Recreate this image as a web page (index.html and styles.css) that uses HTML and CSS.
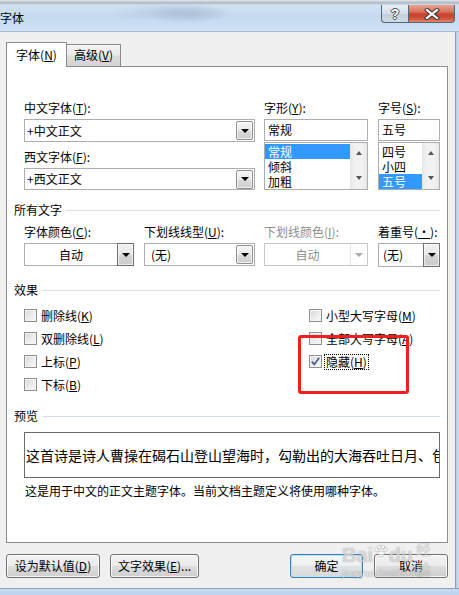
FILE: index.html
```html
<!DOCTYPE html>
<html lang="zh-CN">
<head>
<meta charset="utf-8">
<title>字体</title>
<link rel="stylesheet" href="styles.css">
</head>
<body>
<div class="screen">
  <header class="titlebar">
    <span class="title">字体</span>
    <div class="caption">
      <div class="cap-btn cap-help">?</div>
      <div class="cap-btn cap-close">
        <svg width="16" height="12" viewBox="0 0 16 12"><path d="M3 2 L13 10 M13 2 L3 10" stroke="#3b3b3b" stroke-width="4.2" stroke-linecap="square"/><path d="M3 2 L13 10 M13 2 L3 10" stroke="#ffffff" stroke-width="2.2" stroke-linecap="square"/></svg>
      </div>
    </div>
  </header>

  <div class="frame">
    <div class="client">
      <div class="tabs">
        <div class="tab tab-active">字体(<u>N</u>)</div>
        <div class="tab tab-back">高级(<u>V</u>)</div>
      </div>

      <div class="panel">
        <div class="font-row">
          <div class="col col-face">
            <div class="lbl">中文字体(<u>T</u>):</div>
            <div class="box combo"><span class="val">+中文正文</span><span class="dd dd-inset"><i class="tri"></i></span></div>
            <div class="lbl lbl-next">西文字体(<u>F</u>):</div>
            <div class="box combo short"><span class="val">+西文正文</span><span class="dd dd-inset"><i class="tri"></i></span></div>
          </div>
          <div class="col col-style">
            <div class="lbl">字形(<u>Y</u>):</div>
            <div class="box edit short"><span class="val">常规</span></div>
            <div class="listbox">
              <div class="items">
                <div class="item sel">常规</div>
                <div class="item">倾斜</div>
                <div class="item">加粗</div>
              </div>
              <div class="vscroll"><i class="tri-up"></i><i class="tri-down"></i></div>
            </div>
          </div>
          <div class="col col-size">
            <div class="lbl">字号(<u>S</u>):</div>
            <div class="box edit short"><span class="val">五号</span></div>
            <div class="listbox">
              <div class="items">
                <div class="item">四号</div>
                <div class="item">小四</div>
                <div class="item sel">五号</div>
              </div>
              <div class="vscroll"><i class="tri-up"></i><i class="tri-down"></i></div>
            </div>
          </div>
        </div>

        <div class="group">所有文字</div>
        <div class="attr-row">
          <div class="col a-color">
            <div class="lbl">字体颜色(<u>C</u>):</div>
            <div class="box combo"><span class="val center">自动</span><span class="dd dd-full"><i class="tri"></i></span></div>
          </div>
          <div class="col a-uline">
            <div class="lbl">下划线线型(<u>U</u>):</div>
            <div class="box combo"><span class="val pad">(无)</span><span class="dd dd-inset"><i class="tri"></i></span></div>
          </div>
          <div class="col a-ucolor">
            <div class="lbl disabled">下划线颜色(<u>I</u>):</div>
            <div class="box combo is-disabled"><span class="val center">自动</span><span class="dd dd-off"><i class="tri tri-off"></i></span></div>
          </div>
          <div class="col a-emph">
            <div class="lbl">着重号(<u>·</u>):</div>
            <div class="box combo tall"><span class="val pad2">(无)</span><span class="dd dd-full"><i class="tri"></i></span></div>
          </div>
        </div>

        <div class="group">效果</div>
        <div class="effects">
          <label class="chk"><span class="cb"></span><span class="txt">删除线(<u>K</u>)</span></label>
          <label class="chk"><span class="cb"></span><span class="txt">小型大写字母(<u>M</u>)</span></label>
          <label class="chk"><span class="cb"></span><span class="txt">双删除线(<u>L</u>)</span></label>
          <label class="chk"><span class="cb"></span><span class="txt">全部大写字母(<u>A</u>)</span></label>
          <label class="chk"><span class="cb"></span><span class="txt">上标(<u>P</u>)</span></label>
          <label class="chk"><span class="cb checked"><svg width="11" height="11" viewBox="0 0 11 11"><path d="M1.8 5.6 L4.3 8.4 L9.2 1.8" fill="none" stroke="#4b5d8e" stroke-width="1.7"/></svg></span><span class="txt focus">隐藏(<u>H</u>)</span></label>
          <label class="chk"><span class="cb"></span><span class="txt">下标(<u>B</u>)</span></label>
        </div>

        <div class="group">预览</div>
        <div class="preview"><span>这首诗是诗人曹操在碣石山登山望海时，勾勒出的大海吞吐日月、包蕴万千的壮丽景象</span></div>
        <div class="desc">这是用于中文的正文主题字体。当前文档主题定义将使用哪种字体。</div>
      </div>

      <div class="buttons">
        <button class="btn b-default">设为默认值(<u>D</u>)</button>
        <button class="btn b-effects">文字效果(<u>E</u>)...</button>
        <button class="btn b-ok">确定</button>
        <button class="btn b-cancel">取消</button>
      </div>
    </div>
    <div class="rborder"></div>
  </div>
  <div class="bborder"></div>

  <div class="annot"></div>
  <div class="watermark">
    <div class="wm-top">
      <span class="wm-logo">Bai</span>
      <svg class="wm-paw" width="18" height="16" viewBox="0 0 22 18"><g fill="rgba(255,255,255,0.55)" stroke="rgba(90,90,90,0.35)" stroke-width="1"><ellipse cx="5" cy="7" rx="2.5" ry="3"/><ellipse cx="9" cy="3.5" rx="2.4" ry="3"/><ellipse cx="14" cy="3.5" rx="2.4" ry="3"/><ellipse cx="18" cy="7" rx="2.5" ry="3"/><ellipse cx="11.5" cy="13" rx="5" ry="4"/></g></svg>
      <span class="wm-logo">du</span>
      <span class="wm-cn">经验</span>
    </div>
    <div class="wm-url">jingyan.baidu.com</div>
  </div>
</div>
</body>
</html>
```

FILE: styles.css
```css
* { box-sizing: border-box; }

html, body {
  margin: 0;
  padding: 0;
}

body {
  width: 459px;
  height: 595px;
  overflow: hidden;
  background: #f0f0f0;
  color: #000;
  font-family: "Noto Sans CJK SC", "Noto Sans", "Liberation Sans", sans-serif;
  font-size: 12px;
}

u { text-decoration: underline; text-underline-offset: 1px; }

.screen {
  position: relative;
  width: 459px;
  height: 595px;
  display: flex;
  flex-direction: column;
}

/* ---------- title bar ---------- */
.titlebar {
  flex: none;
  height: 32px;
  display: flex;
  align-items: flex-start;
  padding-top: 5px;
  background:
    radial-gradient(ellipse 60px 10px at 170px 12px, rgba(150,170,195,0.35), transparent),
    radial-gradient(ellipse 40px 10px at 190px 14px, rgba(120,140,170,0.25), transparent),
    linear-gradient(to bottom, #e3e7ec 0px, #aeb7c2 3px, #d3e2f3 5px, #c4d9f0 16px, #cfe1f4 31px, #9fb4cc 32px);
  border-bottom: 1px solid #a9bcd2;
}

.title {
  margin-top: 5px;
  line-height: 16px;
  font-size: 12px;
  color: #000;
}

.caption {
  margin-left: auto;
  margin-right: 4px;
  display: flex;
}

.cap-btn {
  height: 18px;
  display: flex;
  align-items: center;
  justify-content: center;
  border: 1px solid #566577;
  border-top: none;
}

.cap-help {
  width: 27px;
  border-right: none;
  border-radius: 0 0 0 4px;
  background: linear-gradient(to bottom, #e6edf5 0%, #d5dee9 50%, #c2cddb 51%, #cfdae6 100%);
  color: #fff;
  font-family: "Liberation Sans", sans-serif;
  font-weight: bold;
  font-size: 14px;
  line-height: 16px;
  text-shadow: -1px 0 #4a4f56, 1px 0 #4a4f56, 0 -1px #4a4f56, 0 1px #4a4f56;
}

.cap-close {
  width: 47px;
  border-radius: 0 0 4px 0;
  background: linear-gradient(to bottom, #e9a595 0%, #d9705d 40%, #c7402c 55%, #d0533b 80%, #e38a6e 100%);
}

/* ---------- frame ---------- */
.frame {
  flex: none;
  height: 556px;
  display: flex;
}

.client {
  width: 455px;
  display: flex;
  flex-direction: column;
  padding: 10px 7px 0 6px;
  background: #f0f0f0;
}

.rborder {
  width: 4px;
  border-left: 1px solid #8c9fb6;
  background: linear-gradient(to right, #b5cce6, #cfe0f3);
}

.bborder {
  flex: none;
  height: 7px;
  border-top: 1px solid #8c9fb6;
  background: linear-gradient(to bottom, #c9dcf1, #b8d0ea);
}

/* ---------- tabs ---------- */
.tabs {
  height: 24px;
  display: flex;
  align-items: flex-end;
}

.tab {
  position: relative;
  line-height: 16px;
  text-align: center;
  border: 1px solid #898c95;
  border-bottom: none;
}

.tab-active {
  width: 61px;
  height: 25px;
  margin-bottom: -1px;
  padding-top: 4px;
  background: #fff;
  z-index: 1;
}

.tab-back {
  width: 54px;
  height: 22px;
  padding-top: 2px;
  border-left: none;
  background: linear-gradient(to bottom, #f4f4f4 0%, #ebebeb 45%, #dddddd 55%, #d3d3d3 100%);
}

/* ---------- panel ---------- */
.panel {
  width: 442px;
  height: 477px;
  border: 1px solid #898c95;
  background: #fff;
  padding: 33px 7px 0 7px;
  display: flex;
  flex-direction: column;
}

.lbl {
  height: 16px;
  line-height: 16px;
  white-space: nowrap;
}

.lbl.disabled { color: #8d8d8d; }
.lbl-next { margin-top: 7px; }

.col { display: flex; flex-direction: column; }

.font-row {
  display: flex;
  margin-left: 10px;
}

.col-face { width: 231px; }
.col-style { width: 104px; margin-left: 9px; }
.col-size { width: 62px; margin-left: 10px; }

.box {
  margin-top: 3px;
  height: 23px;
  border: 1px solid #abadb3;
  background: #fff;
  display: flex;
  align-items: center;
}

.box.short { height: 22px; }
.box.tall { height: 24px; }

.val {
  flex: 1;
  line-height: 16px;
  padding-left: 2px;
  white-space: nowrap;
  overflow: hidden;
}

.edit .val { padding-left: 3px; }
.val.center { text-align: center; padding-left: 0; }
.val.pad { padding-left: 6px; }
.val.pad2 { padding-left: 4px; }

.dd {
  flex: none;
  display: flex;
  align-items: center;
  justify-content: center;
}

.dd-inset {
  width: 17px;
  height: 19px;
  margin-right: 1px;
  border: 1px solid #8e8e8e;
  border-radius: 2px;
  background: linear-gradient(to bottom, #f6f6f6 0%, #e9e9e9 50%, #dadada 51%, #cfcfcf 100%);
  box-shadow: inset 0 0 0 1px rgba(255,255,255,0.7);
}

.dd-full {
  width: 17px;
  align-self: stretch;
  margin: -1px -1px -1px 0;
  border: 1px solid #707070;
  background: linear-gradient(to bottom, #f2f2f2 0%, #e6e6e6 50%, #d6d6d6 51%, #cbcbcb 100%);
  box-shadow: inset 0 0 0 1px rgba(255,255,255,0.6);
}

.dd-off {
  width: 17px;
  align-self: stretch;
  border-left: 1px solid #e6e6e6;
}

.tri {
  display: block;
  width: 0;
  height: 0;
  border-left: 4px solid transparent;
  border-right: 4px solid transparent;
  border-top: 4px solid #000;
}

.tri-off { border-top-color: #a8a8a8; }

.is-disabled { border-color: #c7c7c7; }
.is-disabled .val { color: #8d8d8d; }

/* listboxes */
.listbox {
  margin-top: 1px;
  height: 48px;
  border: 1px solid #abadb3;
  display: flex;
}

.items {
  flex: 1;
  padding-top: 1px;
}

.item {
  height: 15px;
  line-height: 15px;
  padding-left: 3px;
  white-space: nowrap;
}

.item.sel {
  background: #3399ff;
  color: #fff;
}

.vscroll {
  width: 17px;
  background: linear-gradient(to right, #e6e6e6, #f2f2f2 30%, #f2f2f2 70%, #e6e6e6);
  display: flex;
  flex-direction: column;
  align-items: center;
  justify-content: space-between;
  padding: 8px 0 9px;
}

.tri-up, .tri-down {
  display: block;
  width: 0;
  height: 0;
  border-left: 3.5px solid transparent;
  border-right: 3.5px solid transparent;
}

.tri-up { border-bottom: 4px solid #555; }
.tri-down { border-top: 4px solid #555; }

/* group headers */
.group {
  display: flex;
  align-items: center;
  height: 16px;
  line-height: 16px;
  margin-top: 12px;
  white-space: nowrap;
}

.group::after {
  content: "";
  flex: 1;
  height: 1px;
  margin-left: 4px;
  background: #d5dfe5;
}

.attr-row {
  display: flex;
  align-items: flex-start;
  margin-top: 6px;
  margin-left: 10px;
}

.a-color { width: 110px; }
.a-uline { width: 111px; margin-left: 10px; }
.a-ucolor { width: 104px; margin-left: 9px; }
.a-emph { width: 62px; margin-left: 10px; }

.attr-row + .group { margin-top: 15px; }

/* effects */
.effects {
  display: grid;
  grid-template-columns: 285px auto;
  grid-auto-rows: 23px;
  margin-top: 6px;
  margin-left: 10px;
}

.chk {
  display: flex;
  align-items: center;
}

.cb {
  width: 13px;
  height: 13px;
  border: 1px solid #8f8f8f;
  background: linear-gradient(135deg, #d3d5d9 0%, #eceef0 60%, #f8f8f8 100%);
  box-shadow: inset 0 0 0 1px #f4f4f4;
  display: flex;
  align-items: center;
  justify-content: center;
}

.txt {
  margin-left: 2px;
  padding: 0 1px;
  line-height: 14px;
  border: 1px dotted transparent;
  white-space: nowrap;
}

.txt.focus { border-color: #000; }

.effects + .group { margin-top: 12px; }

.preview {
  margin-top: 8px;
  margin-left: 10px;
  width: 416px;
  height: 46px;
  border: 1px solid #6b6b6b;
  background: #fff;
  display: flex;
  align-items: center;
  padding-left: 1px;
  overflow: hidden;
  white-space: nowrap;
  font-size: 14px;
  line-height: 20px;
}

.desc {
  margin-top: 5px;
  margin-left: 11px;
  line-height: 16px;
  white-space: nowrap;
}

/* buttons */
.buttons {
  display: flex;
  margin-top: 11px;
}

.btn {
  height: 24px;
  padding: 0;
  font-family: inherit;
  font-size: 12px;
  line-height: 16px;
  color: #000;
  border: 1px solid #707070;
  border-radius: 3px;
  background: linear-gradient(to bottom, #f2f2f2 0%, #ebebeb 50%, #dddddd 51%, #cfcfcf 100%);
  box-shadow: inset 0 0 0 1px rgba(255,255,255,0.8);
}

.b-default { width: 94px; }
.b-effects { width: 89px; margin-left: 10px; }
.b-ok {
  width: 73px;
  margin-left: auto;
  border-color: #3c7fb1;
  background: linear-gradient(to bottom, #f4f8fb 0%, #eceff2 50%, #dfe3e6 51%, #d6dadd 100%);
  box-shadow: inset 0 0 0 1px #b9e2f7;
}
.b-cancel { width: 74px; margin-left: 11px; }

/* annotation overlay */
.annot {
  position: absolute;
  left: 298px;
  top: 335px;
  width: 111px;
  height: 59px;
  border: 3px solid #ef2020;
  border-radius: 3px;
}

/* watermark overlay */
.watermark {
  position: absolute;
  left: 342px;
  top: 543px;
  width: 100px;
  display: flex;
  flex-direction: column;
  pointer-events: none;
  color: rgba(255,255,255,0.62);
  text-shadow: 0 0 1px rgba(60,60,60,0.5);
}

.wm-top {
  display: flex;
  align-items: flex-end;
  height: 22px;
}

.wm-logo {
  font-family: "Liberation Sans", sans-serif;
  font-weight: bold;
  font-size: 20px;
  line-height: 20px;
}

.wm-paw { margin: 0 0 6px 0; }

.wm-cn {
  margin-left: 3px;
  font-size: 15px;
  line-height: 20px;
  align-self: flex-start;
  margin-top: -4px;
}

.wm-url {
  margin-top: 2px;
  font-family: "Liberation Sans", sans-serif;
  font-size: 11px;
  line-height: 13px;
}
```
